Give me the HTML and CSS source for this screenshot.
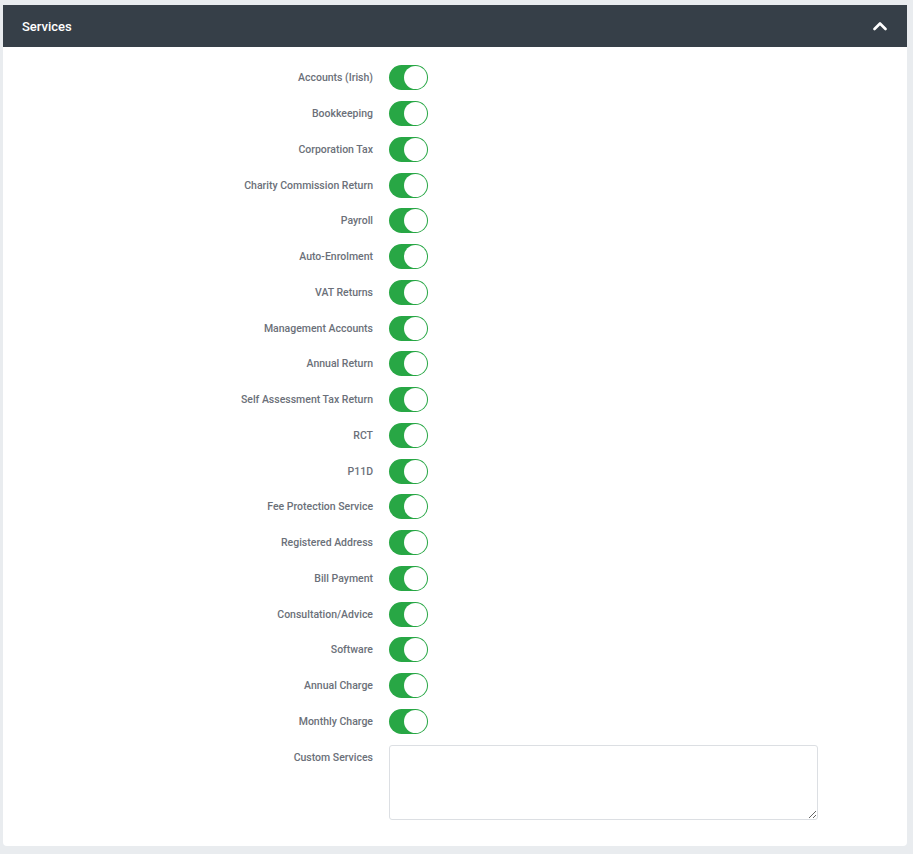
FILE: index.html
```html
<!DOCTYPE html>
<html>
<head>
<meta charset="utf-8">
<link rel="stylesheet" href="styles.css">
</head>
<body>
<div class="card">
  <div class="card-header">
    <span class="title">Services</span>
    <svg class="chev" width="14" height="10" viewBox="0 0 14 10"><path d="M1.5 8 L7 2.5 L12.5 8" fill="none" stroke="#fff" stroke-width="2.6" stroke-linecap="round" stroke-linejoin="round"/></svg>
  </div>
  <div class="card-body">
    <div class="row"><label>Accounts (Irish)</label><span class="toggle"><span class="knob"></span></span></div>
    <div class="row"><label>Bookkeeping</label><span class="toggle"><span class="knob"></span></span></div>
    <div class="row"><label>Corporation Tax</label><span class="toggle"><span class="knob"></span></span></div>
    <div class="row"><label>Charity Commission Return</label><span class="toggle"><span class="knob"></span></span></div>
    <div class="row"><label>Payroll</label><span class="toggle"><span class="knob"></span></span></div>
    <div class="row"><label>Auto-Enrolment</label><span class="toggle"><span class="knob"></span></span></div>
    <div class="row"><label>VAT Returns</label><span class="toggle"><span class="knob"></span></span></div>
    <div class="row"><label>Management Accounts</label><span class="toggle"><span class="knob"></span></span></div>
    <div class="row"><label>Annual Return</label><span class="toggle"><span class="knob"></span></span></div>
    <div class="row"><label>Self Assessment Tax Return</label><span class="toggle"><span class="knob"></span></span></div>
    <div class="row"><label>RCT</label><span class="toggle"><span class="knob"></span></span></div>
    <div class="row"><label>P11D</label><span class="toggle"><span class="knob"></span></span></div>
    <div class="row"><label>Fee Protection Service</label><span class="toggle"><span class="knob"></span></span></div>
    <div class="row"><label>Registered Address</label><span class="toggle"><span class="knob"></span></span></div>
    <div class="row"><label>Bill Payment</label><span class="toggle"><span class="knob"></span></span></div>
    <div class="row"><label>Consultation/Advice</label><span class="toggle"><span class="knob"></span></span></div>
    <div class="row"><label>Software</label><span class="toggle"><span class="knob"></span></span></div>
    <div class="row"><label>Annual Charge</label><span class="toggle"><span class="knob"></span></span></div>
    <div class="row"><label>Monthly Charge</label><span class="toggle"><span class="knob"></span></span></div>
    <div class="row row-text"><label>Custom Services</label><textarea class="textarea"></textarea></div>
  </div>
</div>
</body>
</html>
```
FILE: styles.css
```css
html, body {
  margin: 0;
  padding: 0;
  background: #e9ecef;
  font-family: Roboto, "Liberation Sans", sans-serif;
}
body {
  padding: 5px 6px 0 3px;
}
.card {
  background: #fff;
  border-radius: 0 0 4px 4px;
  width: 904px;
  height: 841px;
  box-sizing: border-box;
}
.card-header {
  background: #363f48;
  height: 42px;
  display: flex;
  align-items: center;
  justify-content: space-between;
  padding: 0 20px 0 19px;
}
.title {
  color: #fff;
  font-size: 13px;
  font-weight: 500;
}
.chev {
  display: block;
  margin-top: -1px;
}
.card-body {
  padding-top: 13px;
}
.row {
  display: flex;
  align-items: center;
  height: 35.75px;
}
.row label {
  width: 386px;
  text-align: right;
  padding-right: 16px;
  box-sizing: border-box;
  font-size: 10.5px;
  font-weight: 500;
  color: #6b7079;
}
.toggle {
  position: relative;
  width: 39px;
  height: 25px;
  border-radius: 13px;
  background: #28a745;
  display: block;
  box-sizing: border-box;
}
.knob {
  position: absolute;
  right: 1px;
  top: 1px;
  width: 23px;
  height: 23px;
  border-radius: 50%;
  background: #fff;
  box-sizing: border-box;
}
.row-text {
  align-items: flex-start;
  height: auto;
  margin-top: 6px;
}
.row-text label {
  padding-top: 6px;
}
.textarea {
  width: 429px;
  height: 75px;
  border: 1px solid #dcdfe3;
  border-radius: 3px;
  margin: 0;
  padding: 0;
  box-sizing: border-box;
  font-family: inherit;
}
```
